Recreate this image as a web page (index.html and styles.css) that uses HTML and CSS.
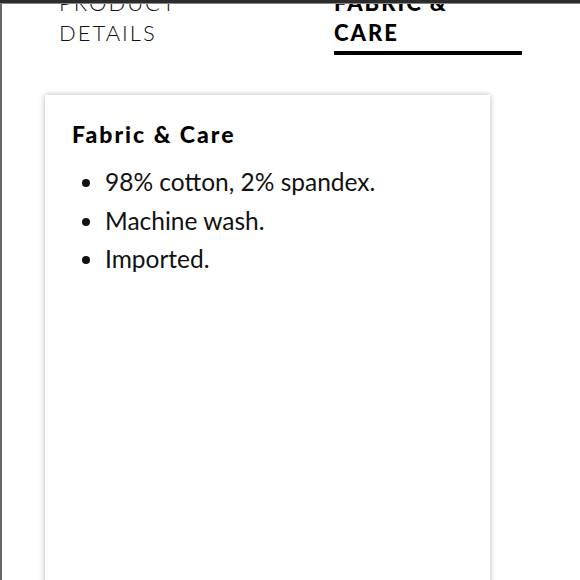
FILE: index.html
```html
<!DOCTYPE html>
<html>
<head>
<meta charset="utf-8">
<link rel="stylesheet" href="styles.css">
</head>
<body>
<div class="frame">
  <div class="topbar"></div>
  <div class="page">
    <nav class="tabs">
      <div class="tab">PRODUCT<br>DETAILS</div>
      <div class="tab active">FABRIC &amp;<br>CARE</div>
    </nav>
    <section class="card">
      <h2 class="card-title">Fabric &amp; Care</h2>
      <ul class="care-list">
        <li>98% cotton, 2% spandex.</li>
        <li>Machine wash.</li>
        <li>Imported.</li>
      </ul>
    </section>
  </div>
</div>
</body>
</html>
```

FILE: styles.css
```css
* { box-sizing: border-box; }
html, body {
  margin: 0;
  padding: 0;
  height: 100%;
  overflow: hidden;
  background: #fff;
}
body {
  font-family: "Lato", "Open Sans", sans-serif;
  color: #111;
}
.frame {
  height: 580px;
  border-left: 2px solid #666;
  display: flex;
  flex-direction: column;
}
.topbar {
  height: 4px;
  background: #2b2b2b;
  border-bottom: 1px solid #888;
  flex: none;
  margin-left: -2px;
}
.page {
  flex: 1;
  overflow: hidden;
  position: relative;
  z-index: 0;
}
.tabs {
  display: flex;
  gap: 87px;
  padding-left: 57px;
  margin-top: -16px;
}
.tab {
  width: 188px;
  font-size: 22px;
  line-height: 30px;
  letter-spacing: 2px;
  font-weight: 300;
  color: #111;
  padding-bottom: 3px;
  border-bottom: 4px solid transparent;
}
.tab.active {
  font-weight: 900;
  color: #000;
  border-bottom-color: #000;
}
.card {
  margin: 40px 0 0 43px;
  width: 445px;
  height: 600px;
  background: #fff;
  box-shadow: 0 0 6px rgba(0,0,0,0.28);
  padding: 26px 27px;
}
.card-title {
  margin: 0 0 16px;
  font-size: 23px;
  font-weight: 900;
  letter-spacing: 2px;
  color: #000;
  line-height: 26px;
}
.care-list {
  margin: 0;
  padding-left: 33px;
  font-size: 24.5px;
  line-height: 38.5px;
  color: #111;
}
```
